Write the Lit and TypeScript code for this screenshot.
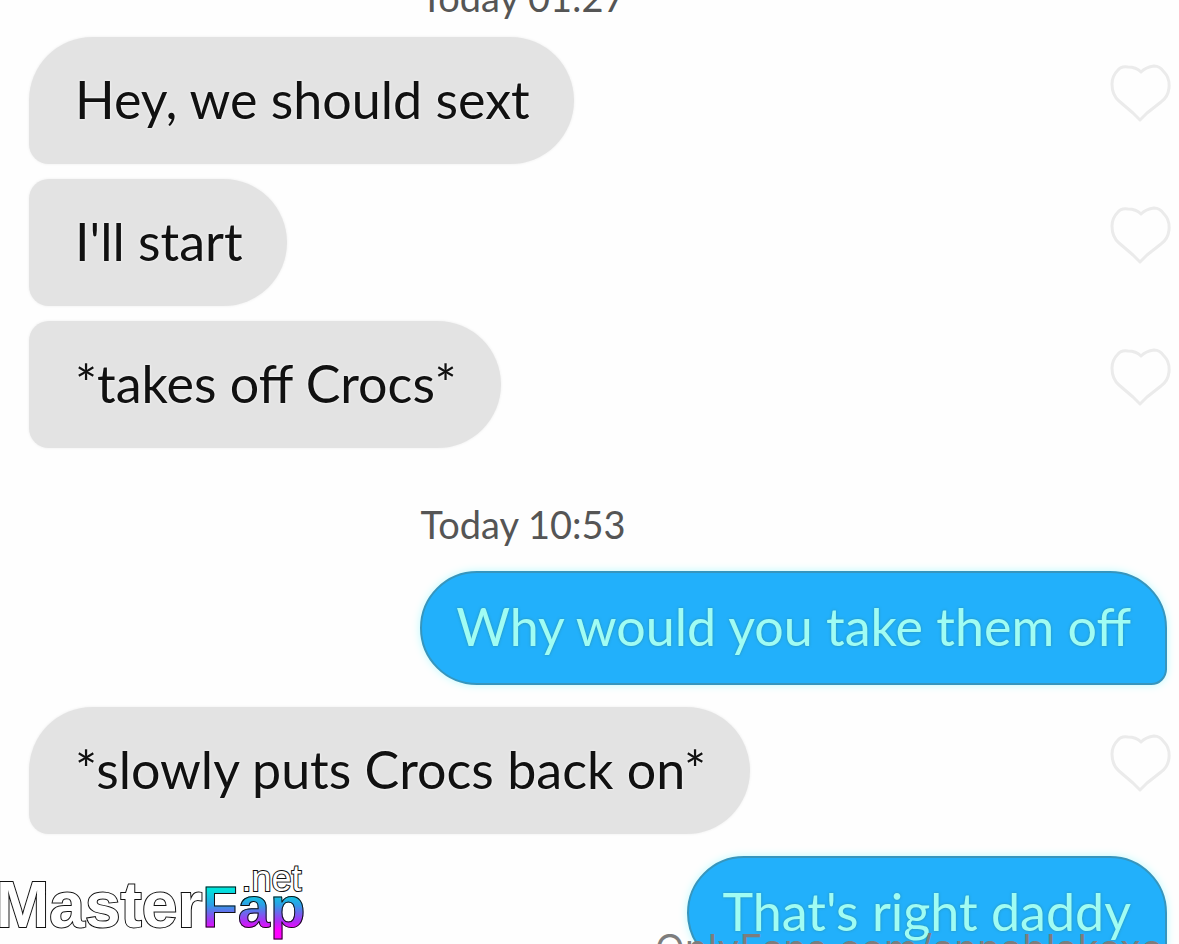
import { LitElement, html, css } from "lit";
import { customElement, property, state } from "lit/decorators.js";
import { classMap } from "lit/directives/class-map.js";

interface Message {
  kind: "in" | "out" | "date";
  text: string;
  joined?: boolean;
}

@customElement("like-button")
class LikeButton extends LitElement {
  @state() liked = false;

  static styles = css`
    :host {
      display: block;
    }
    .like {
      display: block;
      padding: 0;
      border: 0;
      background: none;
      cursor: pointer;
    }
    .heart {
      display: block;
      width: 62px;
      height: 60px;
      fill: none;
      stroke: #ebebeb;
      stroke-width: 3;
      stroke-linejoin: round;
    }
    .liked .heart {
      fill: #e6e6e6;
    }
  `;

  render() {
    return html`<button
      class=${classMap({ like: true, liked: this.liked })}
      aria-label="Like message"
      aria-pressed=${this.liked ? "true" : "false"}
      @click=${() => (this.liked = !this.liked)}
    >
      <svg class="heart" viewBox="0 0 62 60" aria-hidden="true">
        <path
          d="M31 57 L24 50 L10 38 Q3 32 3 21 Q3 13 9 7 Q12 3 19 4 Q27 4 32 9 Q37 4 45 3 Q51 3 55 9 Q61 15 60 25 Q59 34 52 39 L38 50 Z"
        />
      </svg>
    </button>`;
  }
}

@customElement("chat-message")
class ChatMessage extends LitElement {
  @property({ attribute: false }) message!: Message;

  static styles = css`
    :host {
      display: block;
    }
    .row {
      display: flex;
      justify-content: space-between;
      align-items: flex-start;
    }
    .row.out {
      justify-content: flex-end;
      padding-right: 4px;
    }
    .bubble {
      box-sizing: border-box;
      margin: 0;
      font-size: 52px;
      line-height: 60px;
      white-space: nowrap;
    }
    .in .bubble {
      padding: 32px 44px 35px 46px;
      border-radius: 64px 64px 64px 20px;
      background: #e3e3e3;
      color: #111;
      box-shadow: 0 0 3px #ededed;
      text-shadow: 0 0 3px #fff;
    }
    .in.joined .bubble {
      border-top-left-radius: 20px;
    }
    .out .bubble {
      padding: 23px 34px 27px;
      border: 2px solid #3795bd;
      border-radius: 58px 58px 16px 58px;
      background: #22b0fb;
      color: #a0fcf3;
      box-shadow: 0 0 8px #bdfbff;
      text-shadow: 0 0 3px #2b8fa8;
    }
    .like-slot {
      margin-top: 26px;
    }
  `;

  render() {
    const { kind, text, joined } = this.message;
    return html`<div class=${classMap({ row: true, [kind]: true, joined: !!joined })}>
      <p class="bubble">${text}</p>
      ${kind === "in" ? html`<like-button class="like-slot"></like-button>` : ""}
    </div>`;
  }
}

@customElement("app-root")
class AppRoot extends LitElement {
  static styles = css`
    :host {
      display: block;
      position: relative;
      height: 100vh;
      overflow: hidden;
      background: #fefefe;
      font-family: Lato, "Liberation Sans", sans-serif;
    }
    .thread {
      display: flex;
      flex-direction: column;
      padding: 0 8px 0 29px;
      margin-top: -25px;
    }
    .date {
      margin: 0 154px 3px 0;
      color: #555;
      font-size: 38px;
      line-height: 44px;
      text-align: center;
    }
    .gap-s {
      margin-top: 15px;
    }
    .gap-m {
      margin-top: 22px;
    }
    .gap-l {
      margin-top: 54px;
    }
    .credit {
      position: absolute;
      left: 655px;
      top: 925px;
      color: #7d7d7d;
      font-family: Inter, "Liberation Sans", sans-serif;
      font-size: 39px;
      font-weight: 400;
      line-height: 48px;
      white-space: nowrap;
    }
    .brand {
      position: absolute;
      left: -4px;
      bottom: 1px;
      display: flex;
      align-items: baseline;
      font-family: "Liberation Sans", Arial, sans-serif;
      font-size: 64px;
      font-weight: 700;
      line-height: 72px;
      color: #fff;
      -webkit-text-stroke: 2px #111;
      paint-order: stroke fill;
    }
    .accent {
      font-size: 58px;
      -webkit-text-stroke-width: 1px;
      background: linear-gradient(#00e5dc 25%, #2d9fe6 47%, #b02cf5 70%, #ff00ff 82%);
      -webkit-background-clip: text;
      background-clip: text;
      color: transparent;
    }
    .suffix {
      position: absolute;
      right: 4px;
      top: -10px;
      font-size: 36px;
      font-weight: 400;
      line-height: 40px;
    }
  `;

  private items: { gap: string; message: Message }[] = [
    { gap: "", message: { kind: "date", text: "Today 01:27" } },
    { gap: "gap-s", message: { kind: "in", text: "Hey, we should sext" } },
    { gap: "gap-s", message: { kind: "in", text: "I'll start", joined: true } },
    { gap: "gap-s", message: { kind: "in", text: "*takes off Crocs*", joined: true } },
    { gap: "gap-l", message: { kind: "date", text: "Today 10:53" } },
    { gap: "gap-m", message: { kind: "out", text: "Why would you take them off" } },
    { gap: "gap-m", message: { kind: "in", text: "*slowly puts Crocs back on*" } },
    { gap: "gap-m", message: { kind: "out", text: "That's right daddy" } },
  ];

  render() {
    return html`
      <main class="thread">
        ${this.items.map(({ gap, message }) =>
          message.kind === "date"
            ? html`<p class="date ${gap}">${message.text}</p>`
            : html`<chat-message class=${gap} .message=${message}></chat-message>`
        )}
      </main>
      <div class="credit">OnlyFans.com/annablakexo</div>
      <div class="brand">
        <span>Master</span><span class="accent">Fap</span><span class="suffix">.net</span>
      </div>
    `;
  }
}
